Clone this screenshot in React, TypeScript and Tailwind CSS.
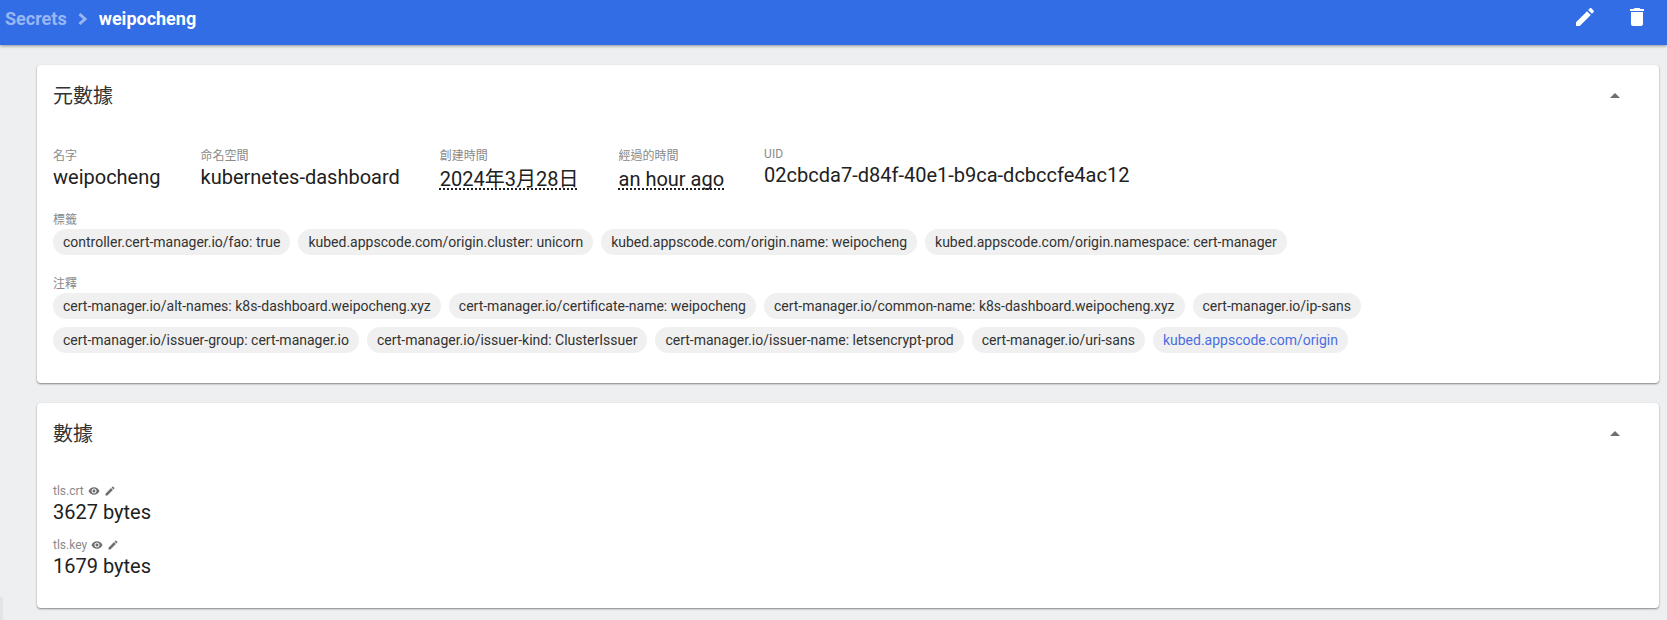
import type { ReactNode } from 'react';

const FONT = "font-['Roboto','Noto_Sans_CJK_TC',sans-serif]";

const LABELS = [
  'controller.cert-manager.io/fao: true',
  'kubed.appscode.com/origin.cluster: unicorn',
  'kubed.appscode.com/origin.name: weipocheng',
  'kubed.appscode.com/origin.namespace: cert-manager',
];

const ANNOTATIONS = [
  'cert-manager.io/alt-names: k8s-dashboard.weipocheng.xyz',
  'cert-manager.io/certificate-name: weipocheng',
  'cert-manager.io/common-name: k8s-dashboard.weipocheng.xyz',
  'cert-manager.io/ip-sans',
  'cert-manager.io/issuer-group: cert-manager.io',
  'cert-manager.io/issuer-kind: ClusterIssuer',
  'cert-manager.io/issuer-name: letsencrypt-prod',
  'cert-manager.io/uri-sans',
];

function EditIcon({ className }: { className: string }) {
  return (
    <svg className={className} viewBox="0 0 24 24" fill="currentColor">
      <path d="M3 17.25V21h3.75L17.81 9.94l-3.75-3.75L3 17.25zM20.71 7.04c.39-.39.39-1.02 0-1.41l-2.34-2.34c-.39-.39-1.02-.39-1.41 0l-1.83 1.83 3.75 3.75 1.83-1.83z" />
    </svg>
  );
}

function DeleteIcon({ className }: { className: string }) {
  return (
    <svg className={className} viewBox="0 0 24 24" fill="currentColor">
      <path d="M6 19c0 1.1.9 2 2 2h8c1.1 0 2-.9 2-2V7H6v12zM19 4h-3.5l-1-1h-5l-1 1H5v2h14V4z" />
    </svg>
  );
}

function EyeIcon({ className }: { className: string }) {
  return (
    <svg className={className} viewBox="0 0 24 24" fill="currentColor">
      <path d="M12 4.5C7 4.5 2.73 7.61 1 12c1.73 4.39 6 7.5 11 7.5s9.27-3.11 11-7.5c-1.73-4.39-6-7.5-11-7.5zM12 17c-2.76 0-5-2.24-5-5s2.24-5 5-5 5 2.24 5 5-2.24 5-5 5zm0-8c-1.66 0-3 1.34-3 3s1.34 3 3 3 3-1.34 3-3-1.34-3-3-3z" />
    </svg>
  );
}

function Chip({ text, link }: { text: string; link?: boolean }) {
  return (
    <span
      className={`mr-2 mb-2 flex h-[26px] items-center rounded-full bg-[#f0f0f0] px-[10px] text-[14px] ${
        link ? 'text-[#4a6ee0]' : 'text-[#333333]'
      }`}
    >
      {text}
    </span>
  );
}

function Field({ label, value, dotted, raised }: { label: string; value: string; dotted?: boolean; raised?: boolean }) {
  return (
    <div className={`mr-10 flex flex-col ${raised ? '-mt-[2px]' : ''}`}>
      <span className="text-[12px] leading-[14px] text-[#8a8a8a]">{label}</span>
      <span
        className={`text-[20px] leading-[26px] text-[#212121] ${
          dotted
            ? 'mt-[3px] underline decoration-dotted decoration-2 underline-offset-[2px] [text-decoration-skip-ink:none]'
            : 'mt-[1px]'
        }`}
      >
        {value}
      </span>
    </div>
  );
}

function Card({ title, children }: { title: string; children: ReactNode }) {
  return (
    <section className="rounded-[4px] bg-white shadow-[0_1px_2px_rgba(0,0,0,0.45)]">
      <div className="flex h-[60px] items-center justify-between pr-[139px] pl-4">
        <h2 className="pt-[2px] text-[20px] font-normal text-[#333333]">{title}</h2>
        <span className="-mr-[100px] h-0 w-0 border-x-[5px] border-b-[5px] border-x-transparent border-b-[#6f6f6f]" />
      </div>
      {children}
    </section>
  );
}

function DataRow({ name, size }: { name: string; size: string }) {
  return (
    <div className="flex flex-col">
      <div className="flex items-center gap-1 text-[12px] leading-[16px] text-[#8a8a8a]">
        <span>{name}</span>
        <EyeIcon className="h-3 w-3 text-[#6f6f6f]" />
        <EditIcon className="h-3 w-3 text-[#6f6f6f]" />
      </div>
      <span className="text-[20px] leading-[26px] text-[#212121]">{size}</span>
    </div>
  );
}

export default function App() {
  return (
    <div className={`${FONT} relative h-[620px] overflow-hidden bg-[#eeeff1]`}>
      {/* Toolbar */}
      <header className="flex h-[45px] items-start justify-between bg-[#326de6] pr-[18px] pl-[5px] shadow-[0_1px_3px_rgba(0,0,0,0.4)]">
        <div className="flex items-center pt-[5px] text-[18px] font-bold">
          <span className="text-white/50">Secrets</span>
          <svg className="mx-[4px] h-6 w-6 text-white/50" viewBox="0 0 24 24" fill="none" stroke="currentColor" strokeWidth="3">
            <path d="M8.5 7l5.5 5-5.5 5" />
          </svg>
          <span className="text-white">weipocheng</span>
        </div>
        <div className="flex items-center gap-[28px] pt-[5px] text-white">
          <EditIcon className="h-6 w-6" />
          <DeleteIcon className="h-6 w-6" />
        </div>
      </header>

      <main className="flex flex-col gap-5 pt-5 pr-2 pl-[37px]">
        <Card title="元數據">
          <div className="px-4 pt-[24px]">
            <div className="flex items-start">
              <Field label="名字" value="weipocheng" />
              <Field label="命名空間" value="kubernetes-dashboard" />
              <Field label="創建時間" value="2024年3月28日" dotted />
              <Field label="經過的時間" value="an hour ago" dotted />
              <Field label="UID" value="02cbcda7-d84f-40e1-b9ca-dcbccfe4ac12" raised />
            </div>
            <div className="mt-[21px] mb-[2px] text-[12px] leading-[14px] text-[#8a8a8a]">標籤</div>
            <div className="flex flex-wrap">
              {LABELS.map((l) => (
                <Chip key={l} text={l} />
              ))}
            </div>
            <div className="mt-[14px] mb-[2px] text-[12px] leading-[14px] text-[#8a8a8a]">注釋</div>
            <div className="flex flex-wrap pb-[22px]">
              {ANNOTATIONS.map((a) => (
                <Chip key={a} text={a} />
              ))}
              <Chip text="kubed.appscode.com/origin" link />
            </div>
          </div>
        </Card>

        <Card title="數據">
          <div className="flex flex-col gap-[12px] px-4 pt-[20px] pb-[29px]">
            <DataRow name="tls.crt" size="3627 bytes" />
            <DataRow name="tls.key" size="1679 bytes" />
          </div>
        </Card>
      </main>

      {/* Sliver at the lower left edge */}
      <div className="absolute bottom-0 left-0 h-[23px] w-[3px] bg-[#e3e4e6]" />
    </div>
  );
}
